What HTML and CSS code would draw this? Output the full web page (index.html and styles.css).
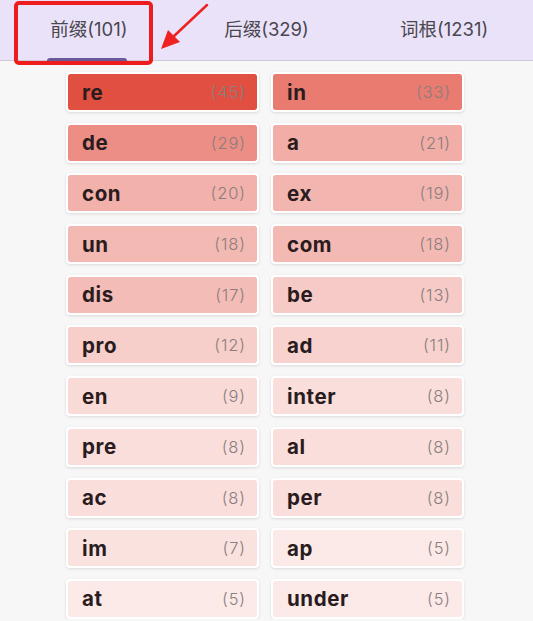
FILE: index.html
```html
<!DOCTYPE html>
<html lang="zh">
<head>
<meta charset="utf-8">
<link rel="stylesheet" href="styles.css">
</head>
<body>
<div class="header">
  <div class="tab active">前缀(101)<span class="indicator"></span></div>
  <div class="tab">后缀(329)</div>
  <div class="tab">词根(1231)</div>
  <div class="mark"></div>
  <svg class="arrow" width="60" height="56" viewBox="0 0 60 56">
    <path d="M50 3 L16 35" stroke="#ee2222" stroke-width="2.5" stroke-linecap="round" fill="none"/>
    <polygon points="4,47 11,28 23,40" fill="#ee2222"/>
  </svg>
</div>
<div class="grid">
  <div class="card" style="--a:0.9"><b>re</b><span>(45)</span></div>
  <div class="card" style="--a:0.68"><b>in</b><span>(33)</span></div>
  <div class="card" style="--a:0.58"><b>de</b><span>(29)</span></div>
  <div class="card" style="--a:0.42"><b>a</b><span>(21)</span></div>
  <div class="card" style="--a:0.4"><b>con</b><span>(20)</span></div>
  <div class="card" style="--a:0.38"><b>ex</b><span>(19)</span></div>
  <div class="card" style="--a:0.36"><b>un</b><span>(18)</span></div>
  <div class="card" style="--a:0.36"><b>com</b><span>(18)</span></div>
  <div class="card" style="--a:0.34"><b>dis</b><span>(17)</span></div>
  <div class="card" style="--a:0.27"><b>be</b><span>(13)</span></div>
  <div class="card" style="--a:0.25"><b>pro</b><span>(12)</span></div>
  <div class="card" style="--a:0.23"><b>ad</b><span>(11)</span></div>
  <div class="card" style="--a:0.19"><b>en</b><span>(9)</span></div>
  <div class="card" style="--a:0.17"><b>inter</b><span>(8)</span></div>
  <div class="card" style="--a:0.17"><b>pre</b><span>(8)</span></div>
  <div class="card" style="--a:0.17"><b>al</b><span>(8)</span></div>
  <div class="card" style="--a:0.17"><b>ac</b><span>(8)</span></div>
  <div class="card" style="--a:0.17"><b>per</b><span>(8)</span></div>
  <div class="card" style="--a:0.15"><b>im</b><span>(7)</span></div>
  <div class="card" style="--a:0.11"><b>ap</b><span>(5)</span></div>
  <div class="card" style="--a:0.11"><b>at</b><span>(5)</span></div>
  <div class="card" style="--a:0.11"><b>under</b><span>(5)</span></div>
</div>
</body>
</html>
```
FILE: styles.css
```css
html, body {
  margin: 0;
  padding: 0;
  background: #f7f7f7;
  font-family: Inter, "Noto Sans CJK SC", sans-serif;
  overflow: hidden;
}
.header {
  position: relative;
  height: 60px;
  background: #e9e2f8;
  border-bottom: 1px solid #cfc9d6;
  display: grid;
  grid-template-columns: 1fr 1fr 1fr;
}
.tab {
  position: relative;
  display: flex;
  align-items: center;
  justify-content: center;
  font-size: 18.5px;
  color: #4a4650;
  padding-bottom: 4px;
  font-family: Inter, "Noto Sans CJK SC", sans-serif;
}
.indicator {
  position: absolute;
  left: 47px;
  width: 80px;
  bottom: -1px;
  height: 3px;
  border-radius: 3px 3px 0 0;
  background: #6a5a9c;
}
.mark {
  position: absolute;
  left: 14px;
  top: 1px;
  width: 131px;
  height: 56px;
  border: 4px solid #ee1c1c;
  border-radius: 5px;
}
.arrow {
  position: absolute;
  left: 157px;
  top: 2px;
}
.grid {
  display: grid;
  grid-template-columns: 193px 193px;
  column-gap: 12px;
  row-gap: 10.7px;
  margin: 11px 0 0 66px;
}
.card {
  height: 36px;
  border: 2px solid #fff;
  border-radius: 4px;
  box-shadow: 0 1px 3px rgba(0,0,0,0.12);
  display: flex;
  align-items: center;
  justify-content: space-between;
  padding: 0 11px 0 14px;
  background: linear-gradient(rgba(222,60,44,var(--a)), rgba(222,60,44,var(--a))), #fff;
  background-clip: padding-box;
}
.card b {
  font-size: 20.5px;
  font-weight: 700;
  color: #2a1c1e;
  letter-spacing: 0.6px;
}
.card span {
  font-size: 16.5px;
  font-weight: 300;
  color: #8a7e7e;
  letter-spacing: 0.9px;
}
```
